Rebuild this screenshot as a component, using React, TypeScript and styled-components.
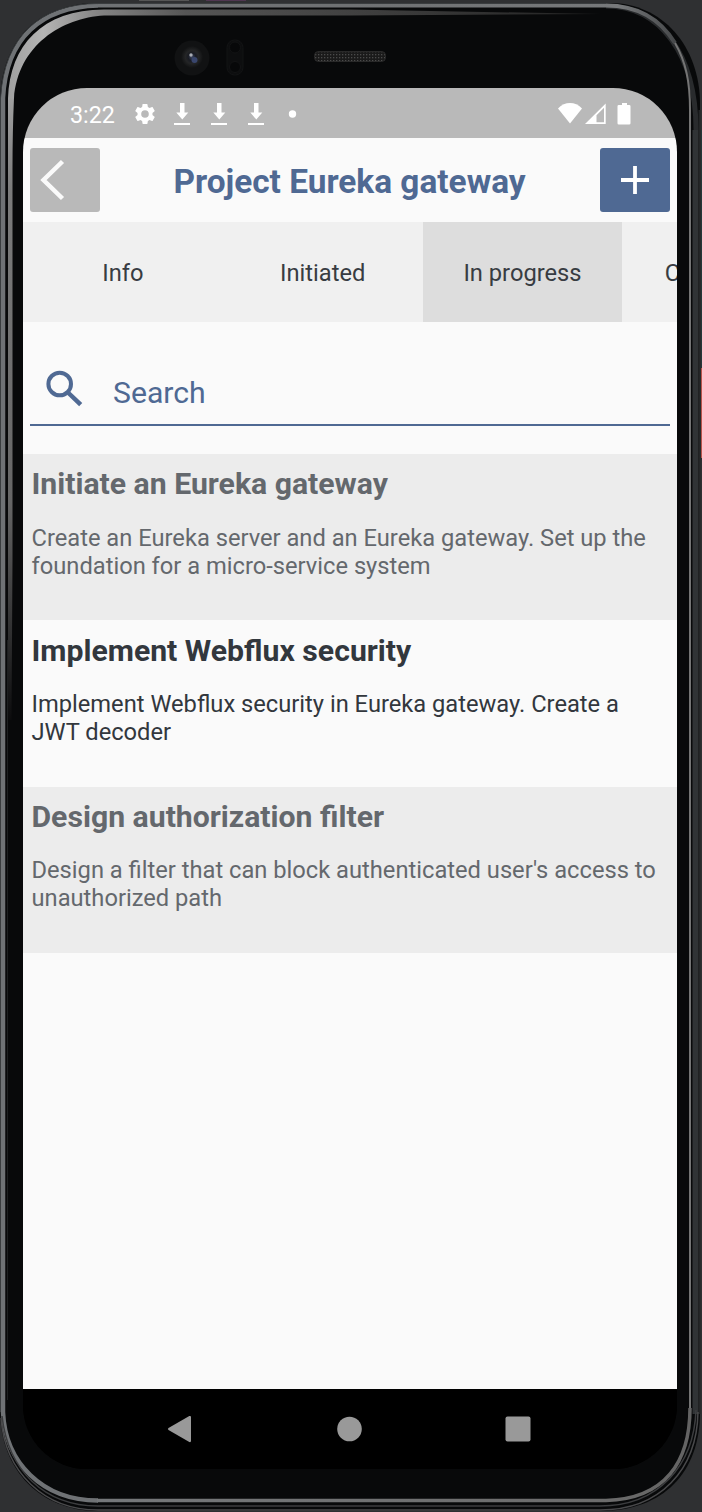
import React from 'react';
import styled, { createGlobalStyle } from 'styled-components';

const blue = '#4f6993';

const GlobalStyle = createGlobalStyle`
  * { box-sizing: border-box; }
  body { margin: 0; background: #2f3032; font-family: Roboto, "Liberation Sans", sans-serif; }
  button { font: inherit; border: 0; padding: 0; margin: 0; }
  h1, h2, p { margin: 0; }
  svg { display: block; flex: none; }
`;

const Device = styled.div`
  position: relative;
  width: 702px;
  height: 1512px;
  padding: 88px 25px 43px 23px;
  overflow: hidden;
`;

const Frame = styled.svg`
  position: absolute;
  inset: 0;
`;

const Screen = styled.main`
  position: relative;
  height: 1381px;
  display: flex;
  flex-direction: column;
  overflow: hidden;
  border-radius: 64px;
  background: #000;
`;

const StatusBar = styled.div`
  height: 50px;
  flex: none;
  display: flex;
  align-items: center;
  padding: 2px 46px 0 47px;
  background: #b9b9b9;
  color: #fff;
`;

const Clock = styled.span`
  width: 63px;
  font-size: 23.3px;
  line-height: 28px;
  padding-top: 1px;
`;

const Notifications = styled.div`
  display: flex;
  align-items: center;
  gap: 13px;
`;

const Signals = styled.div`
  display: flex;
  align-items: center;
  margin-left: auto;
`;

const Content = styled.div`
  flex: 1;
  background: #fafafa;
`;

const Header = styled.header`
  height: 84px;
  display: flex;
  align-items: center;
  justify-content: space-between;
  padding: 0 7px;
`;

const HeaderButton = styled.button<{ $muted?: boolean }>`
  width: 70px;
  height: 64px;
  border-radius: 3px;
  background: ${(p) => (p.$muted ? '#b9b9b9' : blue)};
`;

const Title = styled.h1`
  color: ${blue};
  font-size: 33.4px;
  line-height: 40px;
  font-weight: 700;
  padding: 4px 1px 0 0;
  white-space: nowrap;
`;

const Tabs = styled.nav`
  height: 100px;
  display: flex;
  overflow: hidden;
`;

const Tab = styled.button<{ $active?: boolean }>`
  flex: none;
  width: 199.8px;
  padding-top: 2px;
  font-size: 23.7px;
  color: #383c42;
  background: ${(p) => (p.$active ? '#dddddd' : '#f0f0f0')};
`;

const SearchField = styled.div`
  height: 104px;
  display: flex;
  align-items: flex-end;
  margin: 0 7px 28px;
  padding: 0 0 13px 12px;
  border-bottom: 2px solid ${blue};
  color: ${blue};
  font-size: 30.2px;
  line-height: 36px;
`;

const SearchIcon = styled.svg`
  margin: 0 27px -2px 0;
`;

const Task = styled.article<{ $shaded?: boolean }>`
  height: 166.4px;
  padding: 12.3px 9px 0 8.5px;
  background: ${(p) => (p.$shaded ? '#ececec' : '#fafafa')};
  color: ${(p) => (p.$shaded ? '#64686d' : '#32373d')};
`;

const TaskTitle = styled.h2`
  font-size: 30.2px;
  line-height: 36px;
  font-weight: 700;
`;

const TaskText = styled.p`
  margin-top: 21.3px;
  padding-right: 7px;
  font-size: 23.7px;
  line-height: 28px;
`;

const NavBar = styled.footer`
  height: 80px;
  flex: none;
  display: flex;
  align-items: center;
  justify-content: space-between;
  padding: 0 146px 0 144px;
  background: #000;
`;

const tasks = [
  {
    title: 'Initiate an Eureka gateway',
    text: 'Create an Eureka server and an Eureka gateway. Set up the foundation for a micro-service system',
  },
  {
    title: 'Implement Webflux security',
    text: 'Implement Webflux security in Eureka gateway. Create a JWT decoder',
  },
  {
    title: 'Design authorization filter',
    text: "Design a filter that can block authenticated user's access to unauthorized path",
  },
];

const tabs = ['Info', 'Initiated', 'In progress', 'Completed'];

const DownloadIcon = () => (
  <svg width="24" height="24" viewBox="0 0 24 24" fill="#fff">
    <path d="M10 1h4.5v9.5h3.8l-6 7-6-7H10zM4 21h16v2H4z" />
  </svg>
);

const DeviceFrame = () => (
  <Frame width="702" height="1512" viewBox="0 0 702 1512" fill="none">
    <defs>
      <linearGradient id="rim" x1="0" y1="0" x2="702" y2="0" gradientUnits="userSpaceOnUse">
        <stop offset="0" stopColor="#6f7275" />
        <stop offset=".5" stopColor="#6f7173" />
        <stop offset=".88" stopColor="#77797b" />
        <stop offset="1" stopColor="#303234" />
      </linearGradient>
      <linearGradient id="shineDown" x1="0" y1="98" x2="0" y2="720" gradientUnits="userSpaceOnUse">
        <stop stopColor="#a0a0a0" />
        <stop offset=".15" stopColor="#7b7b7b" />
        <stop offset=".65" stopColor="#666" />
        <stop offset="1" stopColor="#0c0c0d" />
      </linearGradient>
      <linearGradient id="shineAcross" x1="8" y1="0" x2="600" y2="0" gradientUnits="userSpaceOnUse">
        <stop stopColor="#a0a0a0" />
        <stop offset=".06" stopColor="#b4b4b4" />
        <stop offset=".15" stopColor="#858585" />
        <stop offset=".3" stopColor="#565656" />
        <stop offset="1" stopColor="#222" />
      </linearGradient>
      <linearGradient id="bottomRim" x1="0" y1="0" x2="702" y2="0" gradientUnits="userSpaceOnUse">
        <stop stopColor="#777a7d" />
        <stop offset=".85" stopColor="#6c6c6c" />
        <stop offset="1" stopColor="#626262" />
      </linearGradient>
      <radialGradient id="lens">
        <stop stopColor="#3d4763" />
        <stop offset=".35" stopColor="#191b22" />
        <stop offset=".6" stopColor="#242526" />
        <stop offset="1" stopColor="#111213" />
      </radialGradient>
      <pattern id="mesh" width="3" height="3" patternUnits="userSpaceOnUse">
        <rect width="3" height="3" fill="#1a1a1a" />
        <rect width="1.3" height="1.3" fill="#4a4a4a" />
      </pattern>
    </defs>

    <rect x="701" y="130" width="1" height="238" fill="#26383a" />
    <rect x="139" y="0" width="50" height="1" fill="#555" />
    <rect x="206" y="0" width="40" height="1" fill="#4f3650" />

    <path
      d="M0 98C3 36 42 3 98 3H610C662 3 700 46 700 104V1412C700 1472 664 1511 600 1511H98C40 1511 1 1470 0 1412Z"
      fill="#08090a"
    />
    <path d="M695.5 130V1414" stroke="#303335" strokeWidth="6" />
    <path d="M699.5 110V1414" stroke="#242627" strokeWidth="2" />
    <rect x="701" y="368" width="1" height="90" fill="#b8544b" />
    <path d="M606 6C660 6 696 54 696 130" stroke="#292b2d" strokeWidth="5" />
    <path d="M98 5.5H606C640 5.5 662 22 675 43" stroke="url(#rim)" strokeWidth="4" />
    <path d="M690 1408V110C690 82 686 62 675 43" stroke="#747474" strokeWidth="2" />
    <path
      d="M98 5.5C41 7 6 38 3 98V1412C5 1462 42 1500.5 98 1500.5"
      stroke="#6f7275"
      strokeWidth="4.5"
    />
    <path d="M.5 1412V98C4 36 41 3.5 98 3.5H606" stroke="#3a3d3f" strokeWidth="1" />
    <path d="M1 1418C5 1472 44 1510 98 1510H600C660 1510 697 1470 698 1412" stroke="#49494b" strokeWidth="1.5" />
    <path d="M2 1416C8 1470 44 1506 98 1506H600C658 1506 694 1466 696 1410" stroke="#3c3d3f" strokeWidth="1.5" />
    <path d="M97 1500.5H606C665 1499 690 1462 690 1408" stroke="url(#bottomRim)" strokeWidth="3.5" />
    <path d="M8 98H14Q12.5 130 12.5 170V560L11.5 720H8Z" fill="url(#shineDown)" />
    <path d="M7.5 640V1400" stroke="#1e2021" strokeWidth="1" />
    <path
      d="M8 98.5C10 45 42 10 104 9.5H350L600 14L350 15.5H104C62 18 18 45 14 98.5Z"
      fill="url(#shineAcross)"
    />

    <circle cx="192" cy="58" r="17.5" fill="#111213" />
    <circle cx="192" cy="57" r="11" fill="url(#lens)" />
    <circle cx="191" cy="55" r="1.7" fill="#a9adb5" />
    <circle cx="194.5" cy="60" r="3" fill="#39466d" />
    <rect x="227" y="40" width="16" height="35" rx="7.5" fill="#0d0e0f" stroke="#131415" />
    <circle cx="235" cy="47.5" r="5.5" fill="#070809" stroke="#121314" />
    <circle cx="235" cy="67" r="5.5" fill="#070809" stroke="#121314" />
    <rect x="314.5" y="51.5" width="71" height="10" rx="4" fill="url(#mesh)" stroke="#292929" />
  </Frame>
);

export default function App() {
  return (
    <Device>
      <GlobalStyle />
      <DeviceFrame />
      <Screen>
        <StatusBar>
          <Clock>3:22</Clock>
          <Notifications>
            <svg width="24" height="24" viewBox="0 0 24 24" fill="#fff">
              <path d="M19.43 12.98c.04-.32.07-.64.07-.98s-.03-.66-.07-.98l2.11-1.65c.19-.15.24-.42.12-.64l-2-3.46c-.12-.22-.39-.3-.61-.22l-2.49 1c-.52-.4-1.08-.73-1.69-.98l-.38-2.65A.49.49 0 0 0 14 2h-4c-.25 0-.46.18-.49.42l-.38 2.65c-.61.25-1.17.59-1.69.98l-2.49-1c-.23-.09-.49 0-.61.22l-2 3.46c-.13.22-.07.49.12.64l2.11 1.65c-.04.32-.07.65-.07.98s.03.66.07.98l-2.11 1.65c-.19.15-.24.42-.12.64l2 3.46c.12.22.39.3.61.22l2.49-1c.52.4 1.08.73 1.69.98l.38 2.65c.03.24.24.42.49.42h4c.25 0 .46-.18.49-.42l.38-2.65c.61-.25 1.17-.59 1.69-.98l2.49 1c.23.09.49 0 .61-.22l2-3.46c.12-.22.07-.49-.12-.64zM12 15.8a3.8 3.8 0 1 1 0-7.6 3.8 3.8 0 0 1 0 7.6z" />
            </svg>
            <DownloadIcon />
            <DownloadIcon />
            <DownloadIcon />
            <svg width="24" height="24" viewBox="0 0 24 24" fill="#fff">
              <circle cx="11.5" cy="12" r="3.7" />
            </svg>
          </Notifications>
          <Signals>
            <svg width="73" height="24" viewBox="0 0 73 24" fill="#fff">
              <path d="M0 6.5C7-.7 17-.7 24 6.5L12 21.5Z" />
              <path fillRule="evenodd" d="M27 22L47.7 1.5V22ZM38.5 20.2H46V5.8L38.5 13.3Z" />
              <path d="M64 1h5v2h2.2q1.3 0 1.3 1.3v16.9q0 1.3-1.3 1.3h-10.4q-1.3 0-1.3-1.3V4.3q0-1.3 1.3-1.3h3.2z" />
            </svg>
          </Signals>
        </StatusBar>

        <Content>
          <Header>
            <HeaderButton $muted aria-label="Back">
              <svg width="70" height="64" viewBox="0 0 70 64" fill="none">
                <path d="M32.5 13.5L13.5 32L32.5 50.5" stroke="#fafafa" strokeWidth="4.5" />
              </svg>
            </HeaderButton>
            <Title>Project Eureka gateway</Title>
            <HeaderButton aria-label="Add">
              <svg width="70" height="64" viewBox="0 0 70 64" fill="none">
                <path d="M21 32H49M35 18V46" stroke="#fff" strokeWidth="3.8" />
              </svg>
            </HeaderButton>
          </Header>

          <Tabs>
            {tabs.map((tab) => (
              <Tab key={tab} $active={tab === 'In progress'}>
                {tab}
              </Tab>
            ))}
          </Tabs>

          <SearchField>
            <SearchIcon width="44" height="44" viewBox="0 0 44 44" fill="none" stroke={blue}>
              <circle cx="17.7" cy="15" r="11.3" strokeWidth="4" />
              <path d="M26.5 24L38.7 35.7" strokeWidth="4.5" />
            </SearchIcon>
            Search
          </SearchField>

          {tasks.map((task, i) => (
            <Task key={task.title} $shaded={i % 2 === 0}>
              <TaskTitle>{task.title}</TaskTitle>
              <TaskText>{task.text}</TaskText>
            </Task>
          ))}
        </Content>

        <NavBar>
          <svg width="25" height="28" viewBox="0 0 25 28" fill="#999">
            <path d="M1.5 13L22.3 1Q24 .5 24 2V26Q24 27.5 22.3 27L1.5 15Q.3 14 1.5 13Z" />
          </svg>
          <svg width="26" height="26" viewBox="-.5 0 26 26" fill="#999">
            <circle cx="13" cy="13" r="12.3" />
          </svg>
          <svg width="26" height="26" viewBox="0 0 26 26" fill="#999">
            <rect x=".5" y=".5" width="25" height="25" rx="2" />
          </svg>
        </NavBar>
      </Screen>
    </Device>
  );
}
